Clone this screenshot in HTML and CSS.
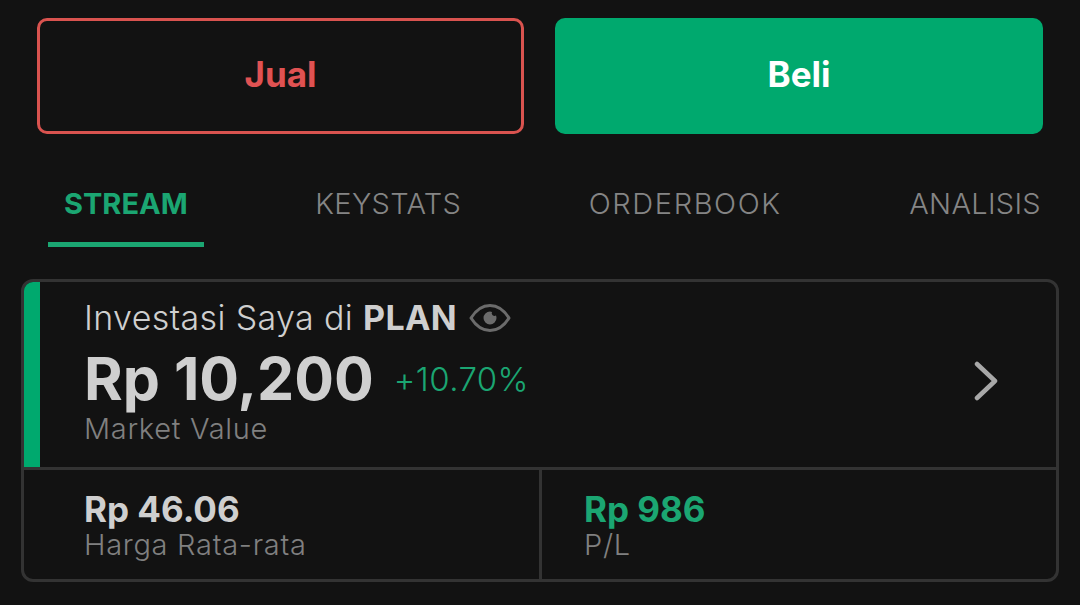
FILE: index.html
```html
<!DOCTYPE html>
<html lang="id">
<head>
    <meta charset="UTF-8">
    <meta name="viewport" content="width=device-width, initial-scale=1.0">
    <title>PLAN</title>
    <link rel="stylesheet" href="styles.css">
</head>
<body>
    <div class="actions">
        <button class="btn btn-sell">Jual</button>
        <button class="btn btn-buy">Beli</button>
    </div>

    <div class="tabs">
        <div class="tab active">STREAM</div>
        <div class="tab">KEYSTATS</div>
        <div class="tab tab-wide">ORDERBOOK</div>
        <div class="tab">ANALISIS</div>
    </div>

    <div class="card">
        <div class="card-top">
            <div class="card-info">
                <div class="card-title">
                    <span>Investasi Saya di <strong>PLAN</strong></span>
                    <svg class="eye" viewBox="0 0 42 32" width="42" height="32">
                        <path d="M2 16C7 8 13 3.500 21 3.500S35 8 40 16C35 24 29 28.500 21 28.500S7 24 2 16Z" fill="none" stroke="#6b6b6b" stroke-width="3" stroke-linejoin="round"/>
                        <path fill-rule="evenodd" d="M21 9.500a6.500 6.500 0 1 0 6.500 6.500 6.500 6.500 0 0 0-.5-2.500 2.800 2.800 0 0 1-4-3.600 6.500 6.500 0 0 0-2-.4Z" fill="#6b6b6b"/>
                    </svg>
                </div>
                <div class="card-value">
                    <span class="amount">Rp 10,200</span>
                    <span class="percent">+10.70%</span>
                </div>
                <div class="label">Market Value</div>
            </div>
            <svg class="chevron" viewBox="0 0 24 40" width="24" height="40">
                <path d="M3 3L21 20L3 37" fill="none" stroke="#a8a8a8" stroke-width="4.500" stroke-linecap="round" stroke-linejoin="round"/>
            </svg>
        </div>
        <div class="card-bottom">
            <div class="stat">
                <div class="stat-value">Rp 46.06</div>
                <div class="label">Harga Rata-rata</div>
            </div>
            <div class="stat">
                <div class="stat-value green">Rp 986</div>
                <div class="label">P/L</div>
            </div>
        </div>
    </div>
</body>
</html>
```

FILE: styles.css
```css
* {
    box-sizing: border-box;
}
html, body {
    height: 100%;
}
body {
    margin: 0;
    padding: 18px 21px 0;
    overflow: hidden;
    background-color: #121212;
    font-family: Inter, "Liberation Sans", sans-serif;
}
.actions {
    display: flex;
    gap: 31px;
    padding: 0 16px;
}
.btn {
    flex: 1;
    height: 116px;
    padding: 0 0 4px;
    border: 3px solid transparent;
    border-radius: 10px;
    font-family: inherit;
    font-size: 35px;
    font-weight: 700;
}
.btn-sell {
    flex: 0 0 487px;
    background: transparent;
    border-color: #d9534f;
    color: #e05252;
}
.btn-buy {
    background-color: #00a96e;
    color: white;
}
.tabs {
    display: flex;
    justify-content: space-between;
    margin: 46px 2px 0 27px;
}
.tab {
    height: 67px;
    padding: 6px 16px 0;
    color: #858585;
    font-size: 29px;
    font-weight: 300;
    letter-spacing: 0.3px;
    line-height: 36px;
}
.tab-wide {
    letter-spacing: 1.6px;
}
.tab.active {
    color: #1ba672;
    font-weight: 700;
    letter-spacing: 0;
    border-bottom: 5px solid #1ba672;
}
.card {
    width: 1038px;
    height: 303px;
    margin-top: 32px;
    border: 3px solid #333333;
    border-radius: 12px;
    overflow: hidden;
}
.card-top {
    display: flex;
    align-items: center;
    justify-content: space-between;
    height: 185px;
    padding-left: 44px;
    padding-right: 58px;
    border-left: 16px solid #00a96e;
}
.card-info {
    align-self: flex-start;
    padding-top: 16px;
}
.card-title {
    display: flex;
    align-items: center;
    gap: 12px;
    color: #cfcfcf;
    font-size: 34px;
    font-weight: 300;
    letter-spacing: 0.37px;
    line-height: 40px;
}
.card-title strong {
    font-weight: 700;
}
.card-value {
    display: flex;
    align-items: center;
    gap: 20px;
    margin-top: 8px;
}
.amount {
    color: #cfcfcf;
    font-size: 59px;
    font-weight: 700;
    line-height: 66px;
}
.percent {
    color: #1ba672;
    font-size: 33px;
    font-weight: 300;
    letter-spacing: 0.4px;
}
.label {
    color: #808080;
    font-size: 29px;
    font-weight: 300;
    letter-spacing: 0.7px;
    line-height: 34px;
}
.chevron {
    margin-top: 13px;
}
.card-bottom {
    display: flex;
    height: 112px;
    border-top: 3px solid #333333;
}
.stat {
    flex: 0 0 515px;
    padding: 20px 0 0 60px;
}
.stat + .stat {
    flex: 1;
    padding-left: 42px;
    border-left: 3px solid #333333;
}
.stat-value {
    color: #cfcfcf;
    font-size: 35px;
    font-weight: 700;
    line-height: 38px;
}
.stat-value.green {
    color: #1ba672;
}
```
